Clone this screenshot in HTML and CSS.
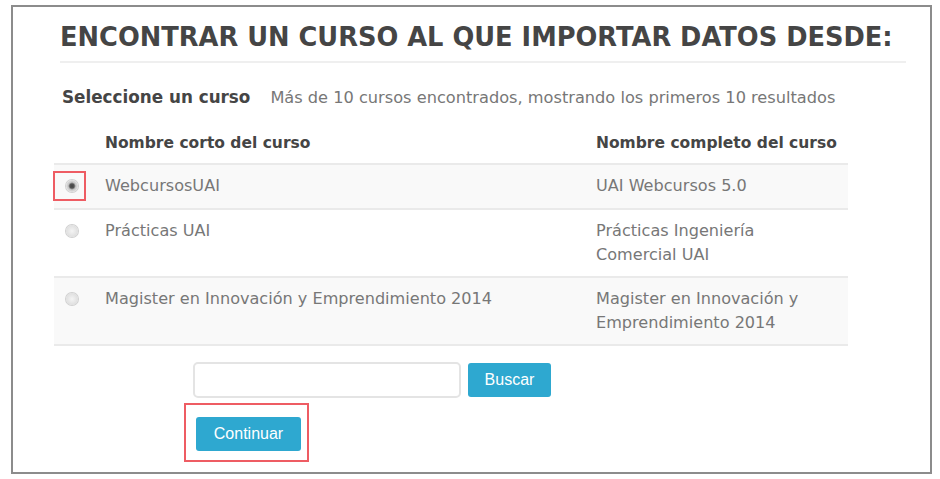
FILE: index.html
```html
<!DOCTYPE html>
<html lang="es">
<head>
<meta charset="utf-8">
<title>Importar</title>
<link rel="stylesheet" href="styles.css">
</head>
<body>
<div class="frame">
  <h2 class="title">ENCONTRAR UN CURSO AL QUE IMPORTAR DATOS DESDE:</h2>
  <div class="subhead">
    <span class="subhead-label">Seleccione un curso</span>
    <span class="subhead-info">Más de 10 cursos encontrados, mostrando los primeros 10 resultados</span>
  </div>
  <div class="table">
    <div class="row head">
      <div class="cell"></div>
      <div class="cell">Nombre corto del curso</div>
      <div class="cell">Nombre completo del curso</div>
    </div>
    <div class="row odd first">
      <div class="cell radio-cell"><span class="highlight"></span><span class="radio checked"></span></div>
      <div class="cell">WebcursosUAI</div>
      <div class="cell">UAI Webcursos 5.0</div>
    </div>
    <div class="row">
      <div class="cell radio-cell"><span class="radio"></span></div>
      <div class="cell">Prácticas UAI</div>
      <div class="cell">Prácticas Ingeniería<br>Comercial UAI</div>
    </div>
    <div class="row odd">
      <div class="cell radio-cell"><span class="radio"></span></div>
      <div class="cell">Magister en Innovación y Emprendimiento 2014</div>
      <div class="cell">Magister en Innovación y<br>Emprendimiento 2014</div>
    </div>
  </div>
  <div class="search">
    <input class="search-input" type="text">
    <button class="btn">Buscar</button>
  </div>
  <div class="continue">
    <button class="btn btn-continue">Continuar</button>
  </div>
</div>
</body>
</html>
```
FILE: styles.css
```css
html, body { margin: 0; padding: 0; background: #fff; }
body { font-family: "DejaVu Sans", Verdana, sans-serif; color: #777; }
.frame {
  margin: 5px 0 0 11px;
  width: 917px;
  height: 465px;
  border: 2px solid #8c8c8c;
  box-sizing: content-box;
}
.title {
  margin: 14px 24px 0 47px;
  padding: 0 0 8px 0;
  font-size: 25.7px;
  line-height: 32px;
  font-weight: bold;
  color: #454545;
  border-bottom: 2px solid #efefef;
  white-space: nowrap;
}
.subhead {
  margin: 22px 0 0 49px;
  display: flex;
  align-items: baseline;
  gap: 20px;
  line-height: 24px;
  white-space: nowrap;
}
.subhead-label { font-weight: bold; font-size: 16.8px; color: #454545; }
.subhead-info { font-size: 16.2px; color: #777; }
.table {
  margin: 11px 0 0 41px;
  width: 794px;
}
.row {
  display: grid;
  grid-template-columns: 51px 491px 1fr;
  border-top: 2px solid #eaeaea;
  font-size: 16.1px;
  line-height: 24px;
  white-space: nowrap;
}
.row:last-child { border-bottom: 2px solid #eaeaea; }
.row.head { border-top: none; font-weight: bold; color: #454545; font-size: 15.5px; }
.row.head .cell { padding: 10px 0 8px 0; }
.row.odd { background: #f9f9f9; }
.cell { padding: 9px 0 9px 0; }
.row.first .cell { padding-bottom: 10px; }
.radio-cell { position: relative; }
.radio {
  display: block;
  width: 12px;
  height: 12px;
  margin: 6px 0 0 12px;
  border-radius: 50%;
  background: radial-gradient(circle, #f4f4f4 0, #e2e2e2 60%, #cfcfcf 100%);
  box-shadow: 0 0 0 1px #d0d0d0;
}
.radio.checked {
  background: radial-gradient(circle, #444 0, #555 25%, #c8c8c8 45%, #e0e0e0 70%, #cfcfcf 100%);
}
.highlight {
  position: absolute;
  left: -1px;
  top: 6px;
  width: 29px;
  height: 26px;
  border: 2px solid #ee5c63;
}
.search {
  display: flex;
  gap: 7px;
  margin: 16px 0 0 180px;
}
.search-input {
  width: 268px;
  height: 36px;
  box-sizing: border-box;
  border: 2px solid #e4e4e4;
  border-radius: 5px;
  background: #fff;
}
.btn {
  font-family: "Liberation Sans", Arial, sans-serif;
  font-size: 16px;
  color: #fff;
  background: #2ea8d0;
  border: none;
  border-radius: 3px;
  height: 34px;
  width: 83px;
  padding: 0;
  margin-top: 1px;
}
.continue {
  margin: 5px 0 0 171px;
  width: 125px;
  height: 59px;
  border: 2px solid #ee5c63;
  box-sizing: border-box;
  padding: 12px 0 0 10px;
}
.btn-continue { margin: 0; height: 34px; width: 105px; }
```
